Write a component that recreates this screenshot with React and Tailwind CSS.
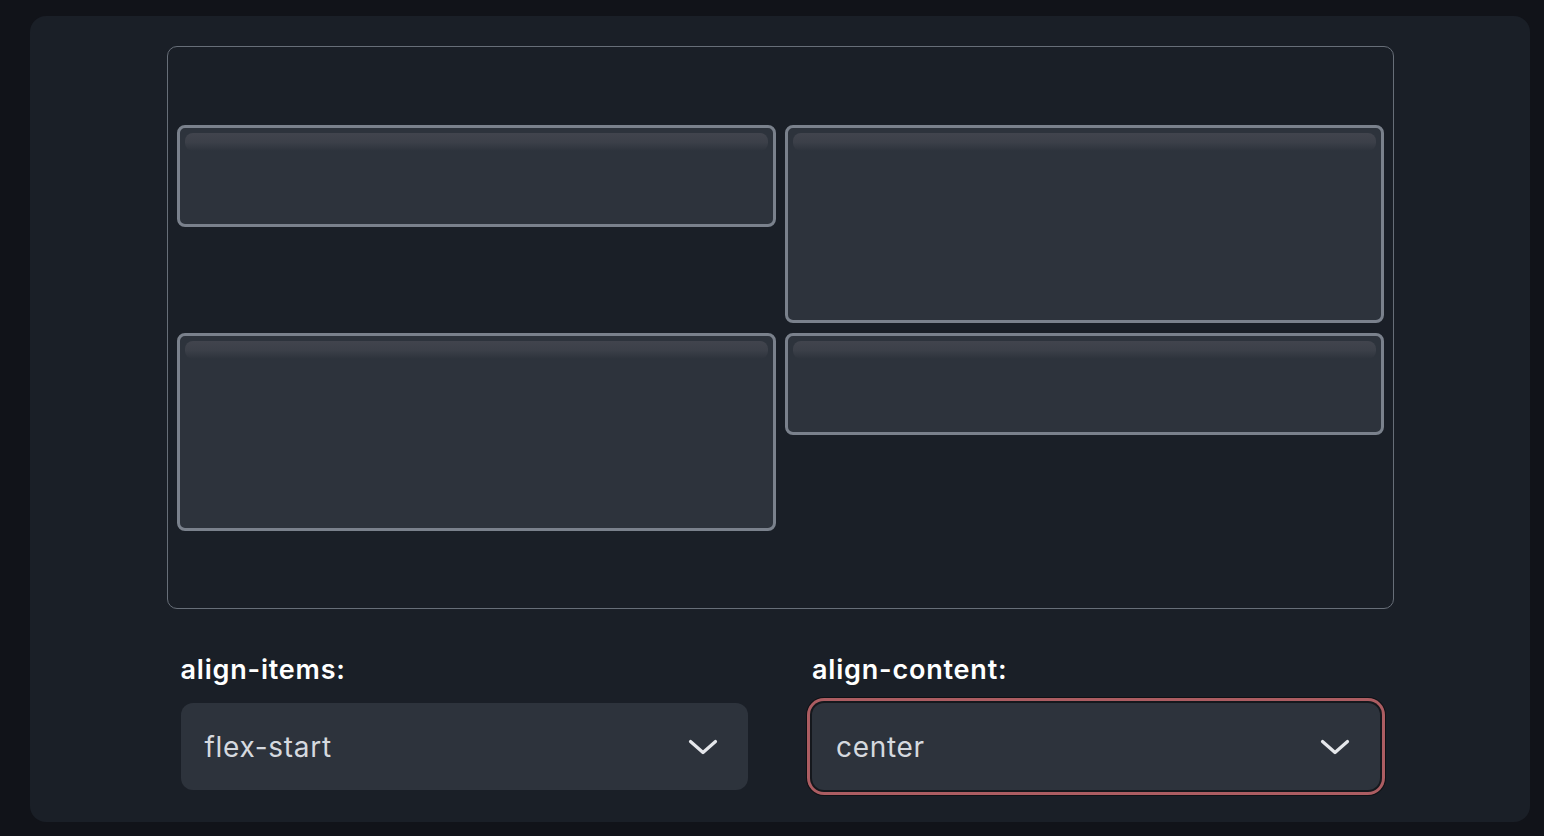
import { useState } from "react";

const items = [
  { id: 1, h: "h-[102px]" },
  { id: 2, h: "h-[198px]" },
  { id: 3, h: "h-[198px]" },
  { id: 4, h: "h-[102px]" },
];

const Chevron = () => (
  <svg width="30" height="16" viewBox="0 0 30 16" fill="none" className="shrink-0">
    <polyline
      points="2.5,2.5 15,13.5 27.5,2.5"
      stroke="#e5e7eb"
      strokeWidth="3.2"
      strokeLinecap="round"
      strokeLinejoin="round"
    />
  </svg>
);

const Select = ({ label, value, focused }) => (
  <div className="flex flex-col gap-[16px]">
    <label className="text-[27px] font-semibold leading-[34px] tracking-[0.8px] text-white">{label}</label>
    <div
      className={
        focused
          ? "flex h-[87px] items-center justify-between rounded-[12px] bg-[#2d333c] pl-[24px] pr-[30px] shadow-[0_0_0_2px_#15181d,0_0_0_5px_#ac5d62,0_0_0_6px_#0f1115]"
          : "flex h-[87px] items-center justify-between rounded-[12px] bg-[#2d333c] pl-[24px] pr-[30px]"
      }
    >
      <span className="text-[28px] leading-none tracking-[0.7px] text-[#d5d9df]">{value}</span>
      <Chevron />
    </div>
  </div>
);

export default function App() {
  const [alignItems] = useState("flex-start");
  const [alignContent] = useState("center");

  return (
    <div className="min-h-screen bg-[#111319] pb-[14px] pl-[30px] pr-[14px] pt-[16px] font-['Inter',sans-serif]">
      <div className="flex flex-col items-center rounded-[16px] bg-[#1a1f27] pb-[32px] pt-[30px]">
        <div className="w-[1227px]">
          {/* demo box */}
          <div className="flex h-[563px] flex-wrap content-center items-start gap-x-[9px] gap-y-[10px] rounded-[10px] border-[1.5px] border-[#676e78] px-[9px]">
            {items.map((it) => (
              <div
                key={it.id}
                className={`relative basis-[calc(50%-4.5px)] ${it.h} rounded-[8px] border-[3px] border-[#7a818c] bg-[#2d333c]`}
              >
                <div className="absolute left-[5px] right-[5px] top-[5px] h-[18px] rounded-[8px] bg-gradient-to-b from-[#41444d] via-[#3c4049] to-[#2d333c]" />
              </div>
            ))}
          </div>

          {/* controls */}
          <div className="mt-[44px] grid grid-cols-2 gap-x-[64px] px-[14px]">
            <Select label="align-items:" value={alignItems} />
            <Select label="align-content:" value={alignContent} focused />
          </div>
        </div>
      </div>
    </div>
  );
}
